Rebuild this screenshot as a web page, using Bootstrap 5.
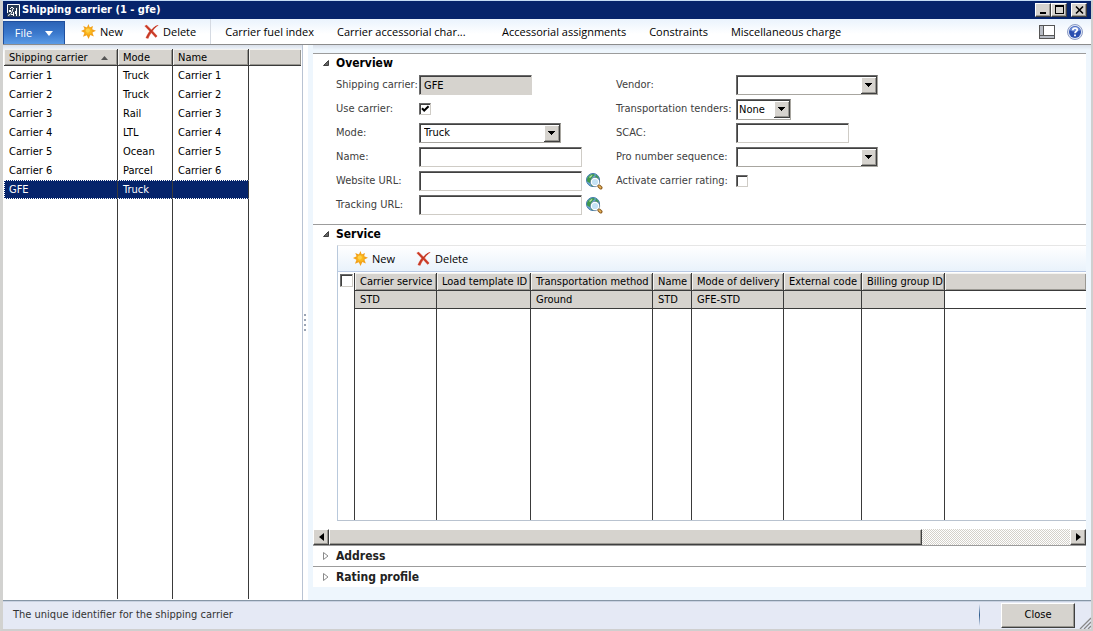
<!DOCTYPE html>
<html lang="en">
<head>
<meta charset="utf-8">
<meta name="viewport" content="width=device-width, initial-scale=1">
<title>Shipping carrier (1 - gfe)</title>
<link href="https://cdn.jsdelivr.net/npm/bootstrap@5.3.0/dist/css/bootstrap.min.css" rel="stylesheet">
<style>
:root { --face:#d6d3ce; --navy:#06246b; --ice:#eef6fd; --line:#3a3a3a; --ui:"DejaVu Sans Condensed","DejaVu Sans",sans-serif; --seg:"Open Sans",sans-serif; }
body { font-family:var(--ui); font-size:11px; line-height:16px; color:#000; background:#fff; }
.app-window { border:solid #cfcfcf; border-width:1px 2px 2px 3px; border-top-color:#c5dcf5; border-left-color:#d2d2d0; }
.title-bar { background:var(--navy); color:#fff; height:18px; font-weight:700; font-size:11px; }
.title-bar .app-icon { margin-right:2px; }
.title-bar button { width:16px; height:14px; }
.bevel { background:var(--face); border:1px solid; border-color:#fff #404040 #404040 #fff; border-radius:0; box-shadow:inset -1px -1px 0 #9a9892; padding:0; color:#000; display:flex; align-items:center; justify-content:center; }
.tool-bar { height:26px; background:linear-gradient(#eaf3fd,#fff 60%); border-bottom:1px solid #8c8c8c; }
.tool-link { border:0; border-radius:0; padding:0; font:11px/16px var(--seg); color:#000; white-space:nowrap; display:flex; align-items:center; }
.bar-sep { width:1px; align-self:stretch; background:#d5dae2; margin:0 14px; }
.menu-items { column-gap:23px; }
.wide-item { width:142px; }
.gap-item { margin-left:21px; }
.file-btn { width:62px; align-self:stretch; margin-top:2px; background:linear-gradient(#2b63b6,#3a78cc 50%,#5b9be6); border:1px solid #1f4f9e; border-bottom:0; color:#fff; justify-content:center; border-radius:0; gap:13px; padding:0; font:11px/16px var(--seg); }
.work { background:linear-gradient(#d9dfe9,#f2f7fc 5px,#fff 9px); min-height:0; }
.left-pane { width:300px; border-right:1px solid #b9c3d3; padding:4px 1px 1px 1px; }
.grid-table { border-collapse:separate; border-spacing:0; table-layout:fixed; width:100%; height:100%; }
.grid-table th, .grid-table td { border-right:1px solid var(--line); padding:0 5px; font-weight:400; white-space:nowrap; overflow:hidden; vertical-align:middle; }
.grid-table th:last-child, .grid-table td:last-child { border-right:0; }
.grid-table thead th { background:var(--face); border-bottom:1px solid var(--line); box-shadow:inset 1px 1px 0 #f4f3f0, inset -1px -1px 0 #9a9892; height:17px; line-height:14px; padding-top:1px; }
.carriers tbody tr { height:19px; }
.carriers tbody tr.fill-row, .services tbody tr.fill-row { height:auto; }
.carriers .picked td { background:var(--navy); color:#fff; border-top:1px dotted #fff; border-bottom:1px dotted #fff; line-height:14px; }
.carriers .picked td:first-child { border-left:1px dotted #fff; padding-left:4px; }
.carriers .picked td:last-child { background:transparent; border:0; }
.splitter { width:10px; background:linear-gradient(90deg,#fff 5px,var(--ice) 5px); }
.right-pane { min-width:0; background:linear-gradient(#d9dfe9,var(--ice) 5px); padding:8px 5px 13px 0; }
.sheet { background:#fff; min-width:0; }
.fast-tab { border-top:1px solid #9c9c9c; }
.tab-title { font-size:12px; line-height:18px; font-weight:700; margin:0; height:18px; padding-left:9px; gap:6px; display:flex; align-items:center; }
.tab-title.shut { height:20px; color:#222; }
.tab-title svg { flex:none; }
.fields { padding:1px 0 7px 23px; column-gap:13px; }
.field-row { height:24px; display:flex; align-items:center; }
.field-row label { color:#404040; white-space:nowrap; }
.lbl-a { width:83px; } .lbl-b { width:120px; }
.sunk { height:20px; border:1px solid; border-color:#6a6a6a #cfccc6 #cfccc6 #6a6a6a; box-shadow:inset 1px 1px 0 #404040; border-radius:0; padding:0 4px; background-color:#fff; color:#000; font:11px/16px var(--ui); appearance:none; }
.sunk.locked { background-color:var(--face); border-right-color:var(--face); border-bottom-color:var(--face); }
.w-box { width:113px; } .w-text { width:163px; } .w-combo { width:142px; } .w-mini { width:55px; }
.w-mini.sunk { padding:2px 0 0 2px; height:21px; }
select.sunk { background-repeat:no-repeat; background-position:right 0 top 1px; border-color:#6a6a6a #a8a6a0 #a8a6a0 #6a6a6a; background-image:url("data:image/svg+xml,%3Csvg xmlns='http://www.w3.org/2000/svg' width='16' height='17' shape-rendering='crispEdges'%3E%3Cpath fill='%23404040' d='M0 0h16v17H0z'/%3E%3Cpath fill='%23fff' d='M0 0h15v16H0z'/%3E%3Cpath fill='%239a9892' d='M1 1h14v15H1z'/%3E%3Cpath fill='%23d6d3ce' d='M1 1h13v14H1z'/%3E%3Cpath d='M4 6h7v1H4zM5 7h5v1H5zM6 8h3v1H6zM7 9h1v1H7z'/%3E%3C/svg%3E"); }
.tick { appearance:none; width:12px; height:12px; margin:0; background:#fff; border:1px solid; border-color:#6a6a6a #cfccc6 #cfccc6 #6a6a6a; box-shadow:inset 1px 1px 0 #404040; border-radius:0; flex:none; display:block; }
.tick:checked { background:#fff url("data:image/svg+xml,%3Csvg xmlns='http://www.w3.org/2000/svg' width='10' height='10'%3E%3Cpath fill='none' stroke='%23000' stroke-width='2' d='M2 4.2l2.2 2.3L8.6 2.2'/%3E%3C/svg%3E"); }
.sub-panel { margin-left:24px; border:1px solid; border-color:#e6e6e6 #fff #b9c3d0 #b9c9dc; border-right:0; margin-top:2px; }
.sub-bar { height:26px; background:linear-gradient(#fff,#e9f2fb); border-bottom:1px solid #b9c9e4; padding-left:15px; margin-bottom:1px; }
.services { height:247px; }
.services thead th { height:18px; }
.services .row-one { height:18px; }
.services .row-one td { background:var(--face); border-bottom:1px solid var(--line); line-height:15px; }
.services .row-one td:first-child, .services .row-one td:last-child { background:#fff; }
.services thead th:first-child { background:#fff; box-shadow:none; border-bottom:0; padding:1px 2px 0; vertical-align:top; }
.services .row-one td:first-child { border-bottom:0; }
.services .tick { width:13px; height:13px; }
.scroll-x { height:16px; margin-top:8px; background:repeating-conic-gradient(#fff 0 25%,#d4d1ca 0 50%) 0 0/2px 2px; }
.scroll-x .bevel { height:16px; width:16px; }
.status-bar { height:29px; background:#e5e9f5; border-top:1px solid #8696a6; color:#333; padding-left:10px; box-shadow:inset 0 1px 0 #c9d2e2; }
.split-line { width:1px; height:22px; background:linear-gradient(#e5e9f5,#2c5a8c 50%,#e5e9f5); margin-right:21px; }
.status-bar .close-btn { width:74px; height:25px; }
</style>
</head>
<body>
<svg class="d-none">
  <symbol id="i-new" viewBox="0 0 16 16"><path fill="#f3a21c" d="M8 0l1.300 3.600L12.800 2l-.9 3.500L16 7.300l-3.900 1.800 1.600 4.200-3.700-1.600L8 16l-1.800-4-4.100 1.500 1.600-4.100L0 7.500l3.800-1.900L2.400 2.100l3.900 1.500z"/><circle cx="8" cy="7.700" r="4" fill="#fbb91c" stroke="#f0a31c" stroke-width=".6"/><circle cx="7.300" cy="7" r="2.200" fill="#ffd04a"/></symbol>
  <symbol id="i-del" viewBox="0 0 16 16"><path fill="#d84a35" d="M.5 2L2.800.8l5.300 5.300C9.800 4 11.700 2 14.700 1l.8.7C13 3 11 5 9.500 7.500l4.800 5.200-1.900 1.900-4.600-4.900C6.500 11.500 5.400 13.800 4.500 15.700L1.700 15c1-2.700 2.500-5.200 4.100-7.200z"/><path fill="none" stroke="#a82a1c" stroke-width=".7" d="M2.500 2.500l10.500 11M3.200 14.800C5 10.500 8 5.500 13 2.300"/></symbol>
  <symbol id="i-globe" viewBox="0 0 17 17"><circle cx="7" cy="7" r="6.500" fill="#6ba6d6" stroke="#3f79a8"/><path fill="#3f9a4c" d="M1 7C1 4 4 1 7.500 1L9 2 7 3.500 5.500 5.500l-.5 3L3.500 10 1.200 8.500zM10 1.500l3 3.500-1.500 1-2.500-1.500zM5 10.500l3 1-1 1.800-2-.6z"/><path fill="#b9e0a0" d="M3 4L5.500 2l1 .8L4 5z"/><circle cx="9" cy="9" r="3.800" fill="#c4e2f5" stroke="#fff" stroke-width="1.400"/><circle cx="9" cy="9" r="4.700" fill="none" stroke="#54718c" stroke-width=".6"/><path stroke="#8b5a1e" stroke-width="3.400" stroke-linecap="round" d="M13.200 13.200l1.600 1.600"/><path stroke="#e8b45a" stroke-width="1.600" stroke-linecap="round" d="M13 13l1.600 1.600"/></symbol>
  <symbol id="i-open" viewBox="0 0 8 8"><path fill="#666" stroke="#222" stroke-width=".8" d="M6.500 1.500v5h-5z"/></symbol>
  <symbol id="i-shut" viewBox="0 0 8 10"><path fill="#fff" stroke="#8a8a8a" d="M1.500 1.500v7L6 5z"/></symbol>
</svg>

<div class="app-window d-flex flex-column vh-100">
  <header class="title-bar d-flex align-items-center ps-1 flex-shrink-0">
    <svg width="13" height="13" viewBox="0 0 13 13" class="app-icon"><path fill="#2a3c55" d="M0 0h13v13H0z"/><path fill="none" stroke="#fff" d="M.5 9V.5h12V12M1 11.500c3-1 4-3 5-7M6.500 12V8M9.500 12V4M3 5l2-2 2 2"/><path fill="#fff" d="M2 6h2v2H2zM8 7h2v3H8zM4 10h2v1H4z"/></svg>
    <span class="me-auto">Shipping carrier (1 - gfe)</span>
    <div class="d-flex pe-1">
      <button class="bevel" type="button" aria-label="Minimize"><svg width="11" height="10" shape-rendering="crispEdges"><path d="M2 7h6v2H2z"/></svg></button>
      <button class="bevel" type="button" aria-label="Maximize"><svg width="11" height="10" shape-rendering="crispEdges"><path fill-rule="evenodd" d="M1 0h9v9H1zM2 2v6h7V2z"/></svg></button>
      <button class="bevel ms-1" type="button" aria-label="Close window"><svg width="11" height="10"><path stroke="#000" stroke-width="1.600" d="M2 1.500l7 7M9 1.500l-7 7"/></svg></button>
    </div>
  </header>

  <nav class="tool-bar d-flex align-items-center flex-shrink-0">
    <button class="file-btn d-flex align-items-center" type="button">File<svg width="8" height="5"><path fill="#fff" d="M0 0h8L4 5z"/></svg></button>
    <button class="btn tool-link ms-3" type="button"><svg class="me-1" width="15" height="15"><use href="#i-new"/></svg>New</button>
    <button class="btn tool-link gap-item" type="button"><svg class="me-1" width="15" height="15"><use href="#i-del"/></svg>Delete</button>
    <div class="bar-sep"></div>
    <div class="d-flex menu-items flex-grow-1">
      <button class="btn tool-link" type="button">Carrier fuel index</button>
      <button class="btn tool-link wide-item" type="button">Carrier accessorial char...</button>
      <button class="btn tool-link" type="button">Accessorial assignments</button>
      <button class="btn tool-link" type="button">Constraints</button>
      <button class="btn tool-link" type="button">Miscellaneous charge</button>
    </div>
    <button class="btn tool-link" type="button" aria-label="Layout"><svg width="16" height="14" shape-rendering="crispEdges"><path fill="#555" d="M0 0h16v14H0z"/><path fill="#fff" d="M1 1h14v9H1z"/><path fill="#b8bcc4" d="M1 1h3v9H1zM1 11h14v2H1z"/><path fill="#555" d="M4 1h1v9H4z"/></svg></button>
    <button class="btn tool-link ms-2 me-2 ps-1" type="button" aria-label="Help"><svg width="16" height="16"><circle cx="8" cy="8" r="7.500" fill="#dfe6f5" stroke="#8c9cc4"/><circle cx="8" cy="8" r="6" fill="#2b4fb0"/><path fill="#6d8cd6" d="M2.500 6a6 6 0 0 1 11 0C10 8 6 8 2.500 6z"/><path fill="none" stroke="#fff" stroke-width="1.800" d="M5.800 6.200c0-3 4.600-2.700 4.400-.2C10 7.500 8 7.500 8 9.300M8 10.600v1.700"/></svg></button>
  </nav>

  <main class="work d-flex flex-grow-1">
    <section class="left-pane flex-shrink-0">
      <table class="grid-table carriers">
        <colgroup><col style="width:114px"><col style="width:55px"><col style="width:76px"><col></colgroup>
        <thead><tr><th scope="col"><span class="d-flex justify-content-between align-items-center">Shipping carrier<svg class="me-1" width="7" height="4"><path fill="#555" d="M0 4h7L3.500 0z"/></svg></span></th><th scope="col">Mode</th><th scope="col">Name</th><th></th></tr></thead>
        <tbody>
          <tr><td>Carrier 1</td><td>Truck</td><td>Carrier 1</td><td></td></tr>
          <tr><td>Carrier 2</td><td>Truck</td><td>Carrier 2</td><td></td></tr>
          <tr><td>Carrier 3</td><td>Rail</td><td>Carrier 3</td><td></td></tr>
          <tr><td>Carrier 4</td><td>LTL</td><td>Carrier 4</td><td></td></tr>
          <tr><td>Carrier 5</td><td>Ocean</td><td>Carrier 5</td><td></td></tr>
          <tr><td>Carrier 6</td><td>Parcel</td><td>Carrier 6</td><td></td></tr>
          <tr class="picked"><td>GFE</td><td>Truck</td><td></td><td></td></tr>
          <tr class="fill-row"><td></td><td></td><td></td><td></td></tr>
        </tbody>
      </table>
    </section>
    <div class="splitter flex-shrink-0 d-flex align-items-center"><svg width="4" height="18" fill="#9aa4b4"><path d="M1 0h2v2H1zM1 5h2v2H1zM1 10h2v2H1zM1 15h2v2H1z"/></svg></div>

    <div class="right-pane flex-grow-1 d-flex flex-column">
      <div class="sheet flex-grow-1">
        <section class="fast-tab">
          <h2 class="tab-title"><svg width="8" height="8"><use href="#i-open"/></svg>Overview</h2>
          <form class="fields d-flex">
            <div>
              <div class="field-row"><label class="lbl-a" for="f1">Shipping carrier:</label><input class="sunk locked w-box" id="f1" value="GFE" readonly></div>
              <div class="field-row"><label class="lbl-a" for="f2">Use carrier:</label><input class="tick" id="f2" type="checkbox" checked></div>
              <div class="field-row"><label class="lbl-a" for="f3">Mode:</label><select class="sunk w-combo" id="f3"><option>Truck</option></select></div>
              <div class="field-row"><label class="lbl-a" for="f4">Name:</label><input class="sunk w-text" id="f4"></div>
              <div class="field-row"><label class="lbl-a" for="f5">Website URL:</label><input class="sunk w-text" id="f5"><svg class="ms-1" width="17" height="17"><use href="#i-globe"/></svg></div>
              <div class="field-row"><label class="lbl-a" for="f6">Tracking URL:</label><input class="sunk w-text" id="f6"><svg class="ms-1" width="17" height="17"><use href="#i-globe"/></svg></div>
            </div>
            <div>
              <div class="field-row"><label class="lbl-b" for="f7">Vendor:</label><select class="sunk w-combo" id="f7"><option></option></select></div>
              <div class="field-row"><label class="lbl-b" for="f8">Transportation tenders:</label><select class="sunk w-mini" id="f8"><option>None</option></select></div>
              <div class="field-row"><label class="lbl-b" for="f9">SCAC:</label><input class="sunk w-box" id="f9"></div>
              <div class="field-row"><label class="lbl-b" for="f10">Pro number sequence:</label><select class="sunk w-combo" id="f10"><option></option></select></div>
              <div class="field-row"><label class="lbl-b" for="f11">Activate carrier rating:</label><input class="tick" id="f11" type="checkbox"></div>
            </div>
          </form>
        </section>

        <section class="fast-tab">
          <h2 class="tab-title"><svg width="8" height="8"><use href="#i-open"/></svg>Service</h2>
          <div class="sub-panel">
            <div class="sub-bar d-flex align-items-center">
              <button class="btn tool-link" type="button"><svg class="me-1" width="15" height="15"><use href="#i-new"/></svg>New</button>
              <button class="btn tool-link gap-item" type="button"><svg class="me-1" width="15" height="15"><use href="#i-del"/></svg>Delete</button>
            </div>
            <table class="grid-table services">
              <colgroup><col style="width:17px"><col style="width:82px"><col style="width:94px"><col style="width:122px"><col style="width:39px"><col style="width:92px"><col style="width:78px"><col style="width:83px"><col></colgroup>
              <thead><tr><th><input class="tick" type="checkbox" aria-label="Select all"></th><th scope="col">Carrier service</th><th scope="col">Load template ID</th><th scope="col">Transportation method</th><th scope="col">Name</th><th scope="col">Mode of delivery</th><th scope="col">External code</th><th scope="col">Billing group ID</th><th></th></tr></thead>
              <tbody>
                <tr class="row-one"><td></td><td>STD</td><td></td><td>Ground</td><td>STD</td><td>GFE-STD</td><td></td><td></td><td></td></tr>
                <tr class="fill-row"><td></td><td></td><td></td><td></td><td></td><td></td><td></td><td></td><td></td></tr>
              </tbody>
            </table>
          </div>
          <div class="scroll-x d-flex">
            <button class="bevel flex-shrink-0" type="button" aria-label="Scroll left"><svg width="5" height="8"><path d="M5 0v8L0 4z"/></svg></button>
            <div class="flex-grow-1"><div class="bevel" style="width:80%"></div></div>
            <button class="bevel flex-shrink-0" type="button" aria-label="Scroll right"><svg width="5" height="8"><path d="M0 0v8l5-4z"/></svg></button>
          </div>
        </section>
        <section class="fast-tab"><h2 class="tab-title shut"><svg width="8" height="10"><use href="#i-shut"/></svg>Address</h2></section>
        <section class="fast-tab"><h2 class="tab-title shut"><svg width="8" height="10"><use href="#i-shut"/></svg>Rating profile</h2></section>
      </div>
    </div>
  </main>

  <footer class="status-bar d-flex align-items-center flex-shrink-0">
    <span class="me-auto">The unique identifier for the shipping carrier</span>
    <span class="split-line"></span>
    <button class="bevel close-btn" type="button">Close</button>
    <svg class="align-self-end ms-1" width="12" height="12"><path stroke="#888" stroke-width="1.300" d="M1 12L12 1M5 12l7-7M9 12l3-3"/></svg>
  </footer>
</div>
<script src="https://cdn.jsdelivr.net/npm/bootstrap@5.3.0/dist/js/bootstrap.bundle.min.js"></script>
</body>
</html>
